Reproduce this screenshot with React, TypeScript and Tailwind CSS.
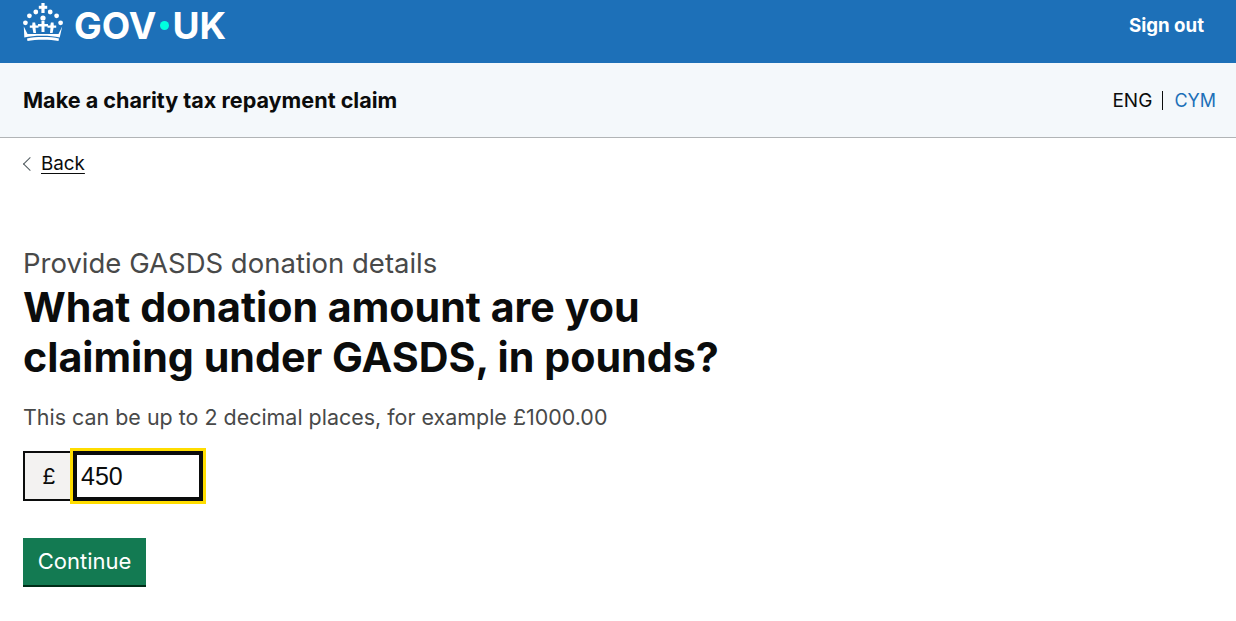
function Crown() {
  return (
    <svg width="40" height="38" viewBox="0 0 40 38" fill="white" aria-hidden="true">
      <rect x="18.4" y="0" width="3.2" height="10" />
      <rect x="15.800" y="2.800" width="8.400" height="3" />
      <circle cx="20" cy="15" r="2.600" />
      <circle cx="12.800" cy="9" r="2.400" />
      <circle cx="27.200" cy="9" r="2.400" />
      <circle cx="6.400" cy="12.800" r="2.400" />
      <circle cx="33.600" cy="12.800" r="2.400" />
      <circle cx="2.400" cy="19.800" r="2.400" />
      <circle cx="37.600" cy="19.800" r="2.400" />
      <path d="M18.500 18h3v3h3.500v2.500h-3.500V29h-3v-5.500H15V21h3.500z" />
      <path d="M9.500 19.500h2.600l.6 3h2.800v2.300h-3L13 30h-2.600l-1-5.200H6.800v-2.300h2.400z" />
      <path d="M27.900 19.500h2.600l.3 3h2.400v2.300h-2.600l-1 5.200H27l.5-5.200h-3v-2.300h2.800z" />
      <path d="M.8 23.500 4.500 31h31l3.700-7.500-2.500 11c-5-1.200-10.500-1.700-17.700-1.700s-12.700.5-17.700 1.700z" />
      <path d="M4 35.500c4.500-1 9.500-1.400 16-1.400s11.500.4 16 1.400l-.5 2.500c-4.500-.8-9.500-1.200-15.500-1.200s-11 .4-15.500 1.200z" />
    </svg>
  );
}

export default function App() {
  const font = "font-['Inter','Liberation_Sans',sans-serif]";
  return (
    <div className={`min-h-[621px] bg-white text-[#0b0c0c] ${font}`}>
      <header className="flex h-[63px] items-start justify-between bg-[#1d70b8] pl-[23px] pr-[32px] text-white">
        <div className="flex items-start gap-[11px] pt-[3px]">
          <Crown />
          <span className="flex items-center text-[37px] font-bold leading-[45px]">
            GOV
            <span className="ml-[4px] mr-[3px] h-[9px] w-[9px] rounded-full bg-[#00ffe0]" />
            UK
          </span>
        </div>
        <a className="pt-[15px] text-[18.7px] font-bold leading-[22px]">Sign out</a>
      </header>

      <div className="flex h-[75px] items-center justify-between border-b border-[#b1b4b6] bg-[#f4f8fb] pl-[23px] pr-[20px]">
        <span className="text-[21.6px] font-bold leading-[25px]">Make a charity tax repayment claim</span>
        <div className="flex items-center text-[19px] leading-[25px]">
          <span>ENG</span>
          <span className="ml-[10px] mr-[11px] h-[19px] w-px bg-[#0b0c0c]" />
          <a className="text-[18px] text-[#1d70b8]">CYM</a>
        </div>
      </div>

      <div className="px-[23px]">
        <a className="mt-[13px] flex items-center text-[18.8px] leading-[25px]">
          <span className="mr-[6px] ml-[2px] h-[10px] w-[10px] rotate-[225deg] border-t border-r border-[#505a5f]" />
          <span className="underline underline-offset-[3px]">Back</span>
        </a>

        <p className="mt-[72px] text-[27.5px] leading-[30px] text-[#484949]">Provide GASDS donation details</p>
        <h1 className="mt-[4px] w-[720px] text-[41.2px] font-bold leading-[50px]">
          What donation amount are you claiming under GASDS, in pounds?
        </h1>
        <p className="mt-[23px] text-[21.45px] leading-[25px] text-[#484949]">
          This can be up to 2 decimal places, for example £1000.00
        </p>

        <div className="mt-[21px] flex h-[50px] items-stretch">
          <div className="flex w-[50px] items-center justify-center border-2 border-r-0 border-[#0b0c0c] bg-[#f3f2f1] text-[22px]">
            £
          </div>
          <div className="flex w-[130px] items-center border-[4px] border-[#0b0c0c] bg-white pl-[4px] pt-[1px] text-[25px] outline-[3px] outline-[#ffdd00] font-['Liberation_Sans',sans-serif]">
            450
          </div>
        </div>

        <button className="mt-[37px] block h-[49px] w-[123px] border-b-2 border-[#002d18] bg-[#137a52] text-[22px] leading-[47px] text-white">
          Continue
        </button>
      </div>
    </div>
  );
}
